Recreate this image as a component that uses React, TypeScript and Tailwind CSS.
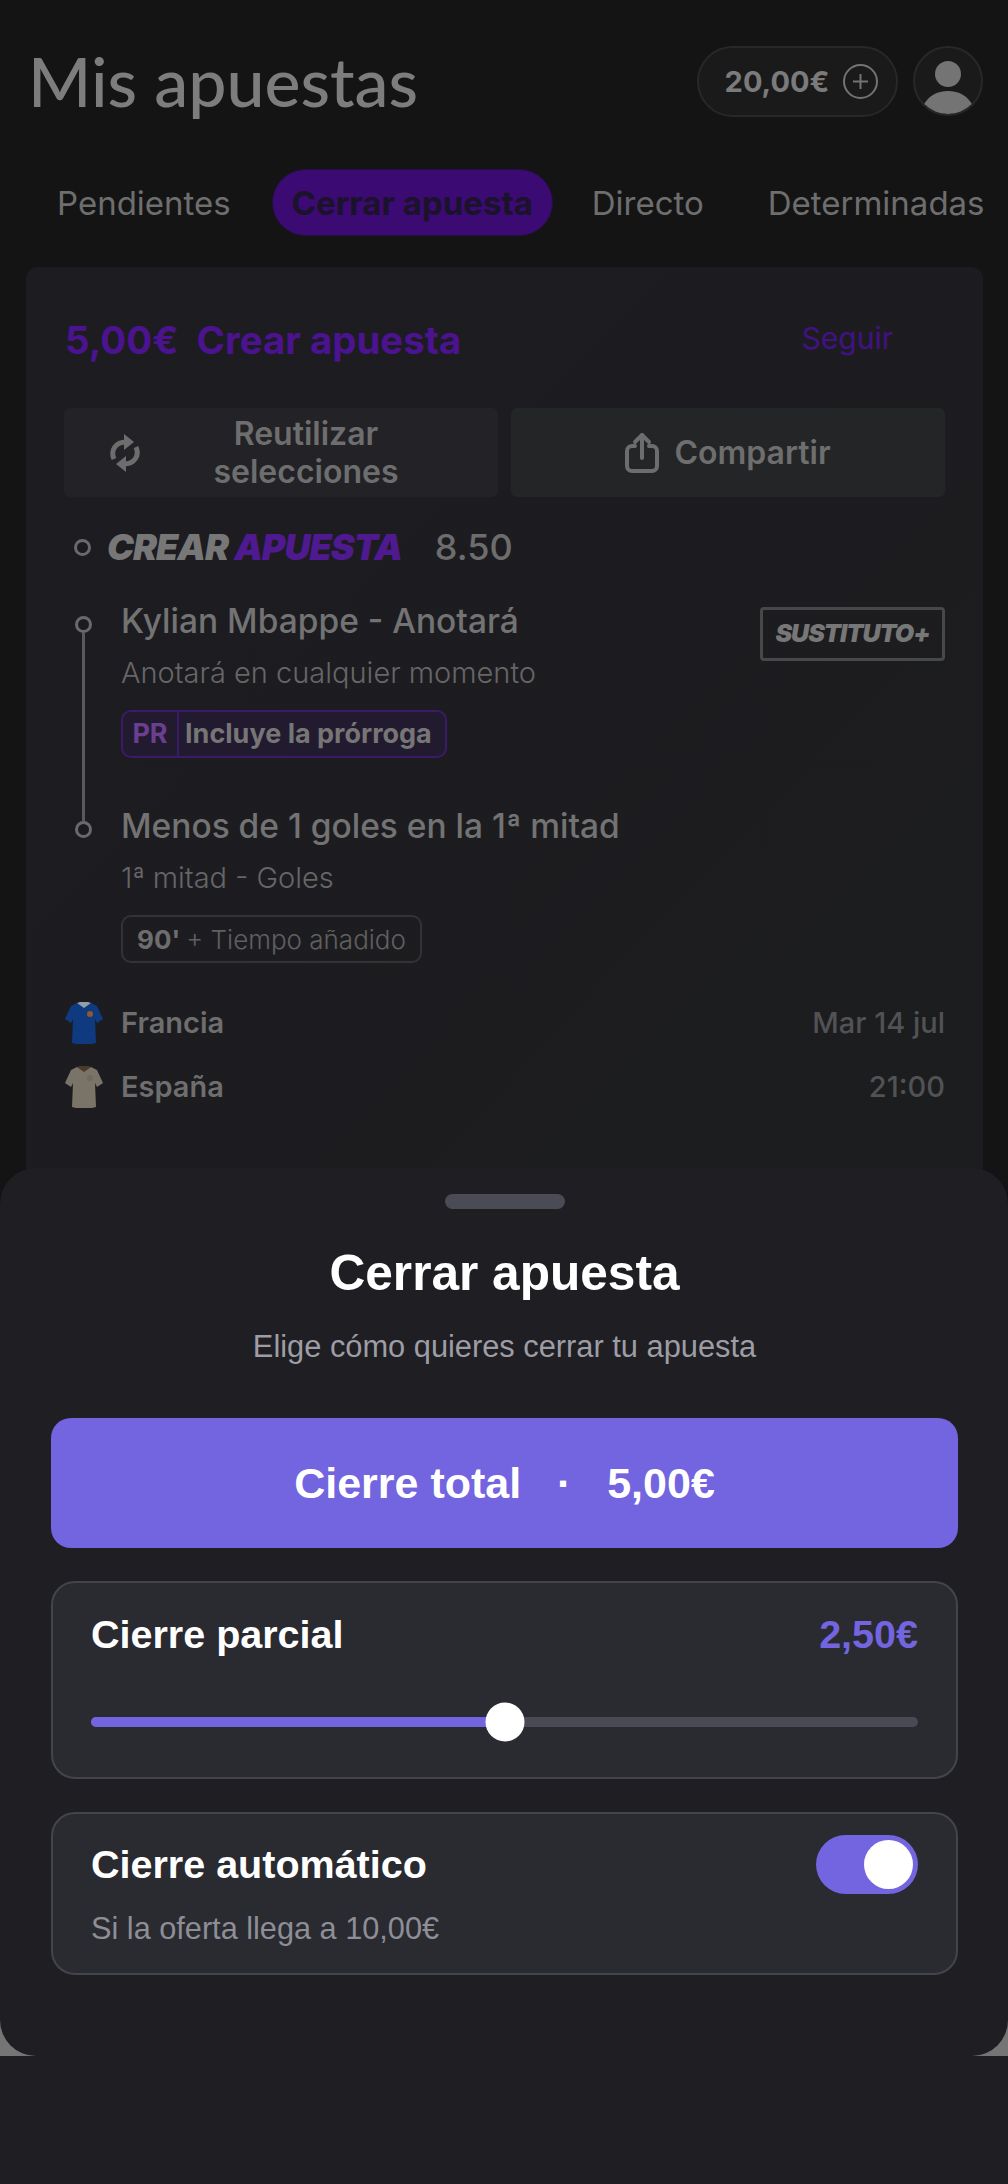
import React from 'react';

const inter = "font-['Inter',sans-serif]";

function RefreshGlyph() {
  return (
    <svg width="30" height="40" viewBox="0 0 30 40" fill="none" stroke="#6d6d6e" strokeWidth="5">
      <path d="M4 26C0 17 6 9 16 9" />
      <path d="M26 14c4 9-2 17-12 17" />
      <path d="M14 1l10 8-10 8z" fill="#6d6d6e" stroke="none" />
      <path d="M16 39L6 31l10-8z" fill="#6d6d6e" stroke="none" />
    </svg>
  );
}

function ShareGlyph() {
  return (
    <svg width="34" height="42" viewBox="0 0 34 42" fill="none" stroke="#6d6d6e" strokeWidth="4" strokeLinecap="round" strokeLinejoin="round">
      <path d="M10 14H7a5 5 0 0 0-5 5v15a5 5 0 0 0 5 5h20a5 5 0 0 0 5-5V19a5 5 0 0 0-5-5h-3" />
      <path d="M17 26V3" />
      <path d="M10 10l7-7 7 7" />
    </svg>
  );
}

function Shirt({ body, trim, badge }: { body: string; trim: string; badge: string }) {
  return (
    <svg width="40" height="42" viewBox="0 0 40 42">
      <path d="M13 1l7 3 7-3 6 3 6 13-6 4-2-4 1 24c-6 2-18 2-24 0l1-24-2 4-6-4L7 4z" fill={body} />
      <path d="M13 1l7 5 7-5-3-1h-8z" fill={trim} />
      <circle cx="26" cy="12" r="3" fill={badge} />
    </svg>
  );
}

function Dot() {
  return <span className="block size-[17px] shrink-0 rounded-full border-[3px] border-[#6a6a6b] bg-[#1c1c20]" />;
}

function Selection({
  title,
  sub,
  children,
  last,
}: {
  title: string;
  sub: string;
  children: React.ReactNode;
  last?: boolean;
}) {
  return (
    <div className="flex">
      <div className="flex w-[38px] shrink-0 flex-col items-center pt-[15px]">
        <Dot />
        {/* connector runs on into the next selection's dot */}
        {!last && <span className="mb-[-15px] w-[3px] flex-1 bg-[#59595a]" />}
      </div>
      <div className={`ml-[19px] ${last ? '' : 'pb-[48px]'}`}>
        <p className="text-[33.5px] leading-[40px] font-medium text-[#737374]">{title}</p>
        <p className="mt-[12px] text-[29px] leading-[40px] font-light text-[#666667]">{sub}</p>
        {children}
      </div>
    </div>
  );
}

export default function App() {
  return (
    <div className={`relative h-[2184px] w-full overflow-hidden bg-[#141415] ${inter}`}>
      {/* Page behind the sheet */}
      <div className="flex items-start justify-between pt-[46px] pr-[25px] pl-[28px]">
        <h1 className="font-['Lato',sans-serif] text-[68px] leading-[69px] font-medium text-[#7d7d7d]">Mis apuestas</h1>
        <div className="flex gap-[15px]">
          <div className="flex h-[71px] w-[201px] items-center justify-center gap-[14px] rounded-full border-2 border-[#28282a] bg-[#1a1a1b] pl-[8px]">
            <span className="text-[29px] font-bold text-[#7b7b7b]">20,00€</span>
            <span className="flex size-[35px] items-center justify-center rounded-full border-2 border-[#737373]">
              <svg width="15" height="15" viewBox="0 0 15 15" stroke="#737373" strokeWidth="2">
                <path d="M7.5 0v15M0 7.5h15" />
              </svg>
            </span>
          </div>
          <div className="size-[70px] overflow-hidden rounded-full border-2 border-[#28282a] bg-[#1a1a1b]">
            <svg width="66" height="66" viewBox="0 0 66 66" fill="#747474">
              <circle cx="33" cy="26" r="13" />
              <path d="M8 58c5-10 14-15 25-15s20 5 25 15c-6 5-15 8-25 8S14 63 8 58z" />
            </svg>
          </div>
        </div>
      </div>

      <div className="mt-[52px] flex items-center text-[33px] leading-[40px] text-[#6e6e6e]">
        <span className="ml-[57px]">Pendientes</span>
        <span className="ml-[41px] flex h-[67px] w-[281px] items-center justify-center rounded-full border border-[#241040] bg-[#3c0a73] font-bold text-[#1a1329]">
          Cerrar apuesta
        </span>
        <span className="ml-[39px]">Directo</span>
        <span className="ml-[64px] whitespace-nowrap">Determinadas</span>
      </div>

      <section className="mt-[31px] mr-[25px] ml-[26px] h-[1000px] rounded-[12px] bg-gradient-to-br from-[#1d1c21] to-[#1c1d1f] pt-[51px] pr-[38px] pl-[38px]">
        <div className="flex items-center justify-between">
          <p className="ml-[1px] text-[38.4px] leading-[44px] font-bold whitespace-pre text-[#4b1390]">5,00€  Crear apuesta</p>
          <span className="mr-[52px] mb-[4px] text-[30px] leading-[40px] text-[#431185]">Seguir</span>
        </div>

        <div className="mt-[46px] grid grid-cols-2 gap-[13px]">
          <button className="flex h-[89px] items-center rounded-[6px] bg-[#232327] pl-[46px] text-[32px] leading-[38px] font-semibold text-[#6e6e6f]">
            <RefreshGlyph />
            <span className="ml-[36px] w-[260px] text-center">Reutilizar selecciones</span>
          </button>
          <button className="flex h-[89px] items-center justify-center gap-[15px] rounded-[6px] bg-[#232527] text-[32px] font-semibold text-[#6e6e6f]">
            <ShareGlyph />
            <span>Compartir</span>
          </button>
        </div>

        <div className="mt-[28px] flex items-center">
          <span className="ml-[10px]">
            <Dot />
          </span>
          <span className="ml-[16px] text-[36px] leading-[44px] font-black tracking-[-1px] text-[#777778] italic">
            CREAR <span className="text-[#4f1a90]">APUESTA</span>
          </span>
          <span className="ml-[33px] text-[36px] leading-[44px] font-medium text-[#6d6d6e]">8.50</span>
        </div>

        <div className="relative mt-[32px]">
          <span className="absolute top-[6px] right-0 flex h-[54px] w-[185px] items-center justify-center rounded-[4px] border-[3px] border-[#47484a] text-[25px] font-black tracking-[-1px] text-[#777] italic">
            SUSTITUTO+
          </span>
          <Selection title="Kylian Mbappe - Anotará" sub="Anotará en cualquier momento">
            <div className="mt-[17px] flex h-[48px] w-[326px] items-center rounded-[10px] border-2 border-[#3c1a6a] bg-[#221a2e] text-[27px] font-bold">
              <span className="flex h-full w-[56px] items-center justify-center border-r-2 border-[#3c1a6a] text-[#6b3f8f]">PR</span>
              <span className="ml-[6px] whitespace-nowrap text-[#767676]">Incluye la prórroga</span>
            </div>
          </Selection>
          <Selection last title="Menos de 1 goles en la 1ª mitad" sub="1ª mitad - Goles">
            <div className="mt-[17px] flex h-[48px] w-[301px] items-center rounded-[10px] border-2 border-[#333335] text-[26px] text-[#606061]">
              <span className="ml-[14px] font-bold text-[#6e6e6f]">90'</span>
              <span className="ml-[6px] font-light">+ Tiempo añadido</span>
            </div>
          </Selection>
        </div>

        <div className="mt-[39px] flex flex-col gap-[22px] text-[29px] leading-[42px]">
          <div className="flex items-center">
            <Shirt body="#0f3a80" trim="#8fa0a8" badge="#8a5a30" />
            <span className="ml-[17px] font-semibold text-[#6e6e6f]">Francia</span>
            <span className="ml-auto font-medium text-[#525254]">Mar 14 jul</span>
          </div>
          <div className="flex items-center">
            <Shirt body="#7a7468" trim="#4a3a2a" badge="#6f695e" />
            <span className="ml-[17px] font-semibold text-[#6e6e6f]">España</span>
            <span className="ml-auto font-medium text-[#525254]">21:00</span>
          </div>
        </div>
      </section>

      {/* Grey showing through the sheet's lower corners */}
      <div className="absolute top-[2014px] h-[42px] w-full bg-[#757575]" />

      {/* Bottom sheet */}
      <div className="absolute top-[1168px] w-full font-['Liberation_Sans',Arial,sans-serif]">
        <div className="h-[888px] rounded-[36px] bg-[#1e1e23] pt-[26px] pr-[50px] pl-[51px]">
          <div className="mx-auto h-[15px] w-[120px] rounded-full bg-[#4b4b56]" />
          <h2 className="mt-[36px] text-center text-[49.6px] leading-[56px] font-bold text-white">Cerrar apuesta</h2>
          <p className="mt-[26px] text-center text-[30.8px] leading-[40px] text-[#9d9da6]">Elige cómo quieres cerrar tu apuesta</p>

          <button className="mt-[51px] flex h-[130px] w-full items-center justify-center rounded-[20px] bg-[#7364df] text-[43px] font-bold whitespace-pre text-white">
            Cierre total{'   ·   '}5,00€
          </button>

          <div className="mt-[33px] h-[198px] rounded-[24px] border-2 border-[#44444c] bg-[#2a2a31] px-[38px] pt-[28px]">
            <div className="flex items-center justify-between text-[39.5px] leading-[46px] font-bold">
              <span className="text-white">Cierre parcial</span>
              <span className="text-[#7364df]">2,50€</span>
            </div>
            <div className="relative mt-[60px] h-[10px] rounded-full bg-[#4a4a54]">
              <div className="h-full w-1/2 rounded-full bg-[#7364df]" />
              <span className="absolute top-1/2 left-1/2 size-[39px] -translate-x-1/2 -translate-y-1/2 rounded-full bg-white" />
            </div>
          </div>

          <div className="mt-[33px] h-[163px] rounded-[24px] border-2 border-[#44444c] bg-[#2a2a31] px-[38px] pt-[21px]">
            <div className="flex items-center justify-between">
              <span className="mb-[2px] text-[39.5px] leading-[46px] font-bold text-white">Cierre automático</span>
              <span className="flex h-[59px] w-[102px] items-center justify-end rounded-full bg-[#7364df] pr-[5px]">
                <span className="size-[49px] rounded-full bg-white" />
              </span>
            </div>
            <p className="mt-[15px] text-[30.7px] leading-[40px] text-[#8e8e96]">Si la oferta llega a 10,00€</p>
          </div>
        </div>
        <div className="h-[128px] bg-[#1e1e23]" />
      </div>
    </div>
  );
}
